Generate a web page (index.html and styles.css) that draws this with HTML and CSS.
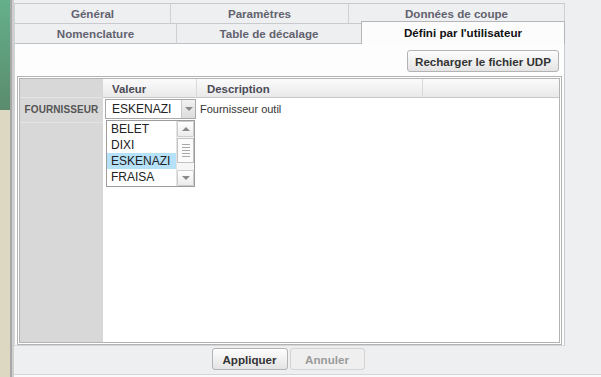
FILE: index.html
```html
<!DOCTYPE html>
<html lang="fr">
<head>
<meta charset="utf-8">
<title>Défini par l'utilisateur</title>
<link rel="stylesheet" href="styles.css">
</head>
<body>
<div class="app">
  <div class="side"><div class="side-green"></div><div class="side-beige"></div></div>
  <div class="edge"></div>
  <div class="main">
    <div class="frame">
      <div class="tabrow row1">
        <div class="tab">Général</div>
        <div class="tab">Paramètres</div>
        <div class="tab last">Données de coupe</div>
      </div>
      <div class="tabrow row2">
        <div class="tab">Nomenclature</div>
        <div class="tab nosep">Table de décalage</div>
        <div class="tab selected">Défini par l'utilisateur</div>
      </div>
      <div class="content">
        <div class="toolbar"><button class="btn btn-reload">Recharger le fichier UDP</button></div>
        <div class="grid">
          <div class="rowheads">
            <div class="rh-head"></div>
            <div class="rh-cell">FOURNISSEUR</div>
          </div>
          <div class="table">
            <div class="thead">
              <div class="th">Valeur</div>
              <div class="th">Description</div>
              <div class="th th-last"></div>
            </div>
            <div class="trow">
              <div class="td td-value">
                <div class="combo">
                  <span class="combo-text">ESKENAZI</span>
                  <span class="combo-btn"><span class="tri-down"></span></span>
                  <div class="popup">
                    <div class="list">
                      <div class="item">BELET</div>
                      <div class="item">DIXI</div>
                      <div class="item sel">ESKENAZI</div>
                      <div class="item">FRAISA</div>
                    </div>
                    <div class="vscroll">
                      <div class="sbtn"><span class="tri-up"></span></div>
                      <div class="track">
                        <div class="thumb"><span></span><span></span><span></span><span></span><span></span></div>
                      </div>
                      <div class="sbtn"><span class="tri-down"></span></div>
                    </div>
                  </div>
                </div>
              </div>
              <div class="td td-desc">Fournisseur outil</div>
              <div class="td"></div>
            </div>
          </div>
        </div>
      </div>
    </div>
    <div class="footer">
      <div class="footer-inner">
        <button class="btn btn-apply">Appliquer</button>
        <button class="btn btn-cancel" disabled>Annuler</button>
      </div>
    </div>
    <div class="rest"></div>
  </div>
</div>
</body>
</html>
```
FILE: styles.css
```css
* { box-sizing: border-box; margin: 0; padding: 0; }
html, body { height: 100%; }
body {
  font-family: "Liberation Sans", Arial, sans-serif;
  font-size: 12px;
  color: #333;
  background: #f8f8f8;
  overflow: hidden;
}
.app { display: flex; height: 377px; }
.side { width: 10px; display: flex; flex-direction: column; }
.side-green { height: 110px; background: linear-gradient(#64b08a, #5a8b6d); }
.side-beige { flex: 1; background: #ddd8c1; }
.edge { width: 4px; border-left: 2px solid #a8a8a8; background: #cfcfcf; }

.main { flex: 1; display: flex; flex-direction: column; background: #eeeff1; padding-top: 3px; }
.frame { width: 551px; }

.tabrow { display: grid; border-left: 1px solid #d2d3d6; }
.row1 {
  grid-template-columns: 156px 178px 1fr;
  height: 21px;
  border-top: 1px solid #c9cacd;
  border-bottom: 1px solid #c9cacd;
}
.row2 { grid-template-columns: 162px 184px 1fr; height: 20px; }
.tab {
  font-weight: bold;
  font-size: 11.6px;
  color: #62626f;
  text-align: center;
  line-height: 19px;
  border-right: 1px solid #cfd0d3;
  background: #eeeff1;
  white-space: nowrap;
}
.row2 .tab { border-bottom: 1px solid #bfc0c3; }
.tab.nosep { border-right: none; }
.tab.selected {
  position: relative;
  z-index: 1;
  margin-top: -3px;
  height: 23px;
  background: #fcfcfc;
  color: #111;
  border: 1px solid #b5b6b9;
  border-bottom: none;
  line-height: 21px;
}

.content {
  height: 302px;
  background: #fdfdfd;
  border-left: 1px solid #d2d3d6;
  border-right: 1px solid #c9cacd;
  border-bottom: 1px solid #d6d6d6;
  display: flex;
  flex-direction: column;
}
.toolbar { display: flex; justify-content: flex-end; padding: 6px 5px 4px 0; }

.btn {
  height: 22px;
  border: 1px solid #b3b3b3;
  border-radius: 3px;
  background: linear-gradient(#fdfdfd, #e4e4e4);
  font-family: "Liberation Sans", Arial, sans-serif;
  font-weight: bold;
  font-size: 11.6px;
  color: #333;
}
.btn-reload { width: 152px; }
.btn-apply { width: 76px; }
.btn-cancel {
  width: 75px;
  margin-left: 2px;
  border-color: #d3d3d3;
  background: #efefef;
  color: #9a9a9a;
}

.grid {
  height: 269px;
  margin: 0 2px;
  border: 3px double #b3b3b3;
  background: #fff;
  display: flex;
}
.rowheads { width: 83px; background: #d8d8d8; }
.rh-head { height: 19px; border-bottom: 1px solid #e4e4e4; }
.rh-cell {
  height: 25px;
  border-bottom: 1px solid #e4e4e4;
  font-weight: bold;
  font-size: 10px;
  color: #555;
  text-align: center;
  line-height: 24px;
  letter-spacing: 0.1px;
}
.table { flex: 1; display: flex; flex-direction: column; }
.thead {
  display: grid;
  grid-template-columns: 94px 226px 1fr;
  height: 19px;
  background: linear-gradient(#fbfbfb, #e9e9ea);
  border-bottom: 1px solid #c8c8c8;
}
.th {
  font-weight: bold;
  font-size: 11.4px;
  color: #4a4a55;
  line-height: 18px;
  padding: 1px 0 0 9px;
  border-right: 1px solid #dadada;
}
.th + .th { padding-left: 10px; }
.th-last { border-right: none; }
.trow { display: grid; grid-template-columns: 94px 226px 1fr; height: 24px; }
.td-value { padding: 1px 0 0 2px; }
.td-desc { padding-left: 3px; line-height: 23px; font-size: 11px; color: #333; }

.combo {
  position: relative;
  width: 91px;
  height: 20px;
  border: 1px solid #a9a9a9;
  background: #fff;
  display: flex;
}
.combo-text { flex: 1; padding-left: 6px; line-height: 18px; font-size: 12px; color: #222; }
.combo-btn {
  width: 14px;
  border-left: 1px solid #c9c9c9;
  background: linear-gradient(#f2f2f2, #dcdcdc);
  display: flex;
  align-items: center;
  justify-content: center;
}
.tri-down {
  width: 0; height: 0;
  border-left: 4px solid transparent;
  border-right: 4px solid transparent;
  border-top: 4px solid #8a8a8a;
}
.tri-up {
  width: 0; height: 0;
  border-left: 4px solid transparent;
  border-right: 4px solid transparent;
  border-bottom: 4px solid #8a8a8a;
}
.popup {
  position: absolute;
  top: 20px;
  left: 0;
  width: 89px;
  height: 67px;
  border: 1px solid #9c9c9c;
  background: #fff;
  display: flex;
  z-index: 5;
}
.list { flex: 1; }
.item { height: 16px; line-height: 16px; padding-left: 4px; font-size: 12px; color: #222; }
.item.sel { background: #b6e1fb; }
.vscroll { width: 18px; display: flex; flex-direction: column; background: #f6f6f6; border-left: 1px solid #e2e2e2; }
.sbtn {
  height: 16px;
  border: 1px solid #cdcdcd;
  border-radius: 1px;
  background: linear-gradient(#ffffff, #ececec);
  display: flex;
  align-items: center;
  justify-content: center;
}
.track { flex: 1; }
.thumb {
  margin-top: 1px;
  height: 25px;
  border: 1px solid #c3c3c3;
  background: #fbfbfb;
  display: flex;
  flex-direction: column;
  align-items: center;
  justify-content: center;
  gap: 2px;
}
.thumb span { width: 8px; height: 1px; background: #a9a9a9; }

.footer { height: 29px; border-bottom: 1px solid #d5d5d5; padding-top: 2px; }
.footer-inner { width: 551px; display: flex; justify-content: center; padding-right: 3px; }
.rest { flex: 1; background: #fafafa; }
```
